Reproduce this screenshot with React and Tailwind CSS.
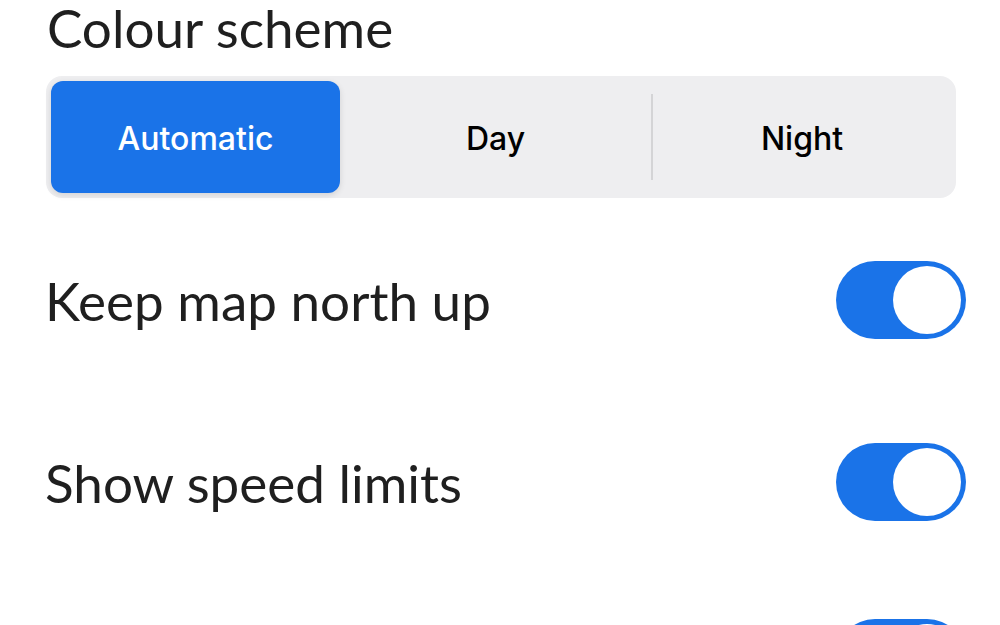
import React from "react";

function Toggle() {
  return (
    <div className="flex h-[78px] w-[130px] items-center justify-end rounded-full bg-[#1a73e8] p-[5px]">
      <div className="h-[68px] w-[68px] rounded-full bg-white" />
    </div>
  );
}

function Row({ label }) {
  return (
    <div className="flex h-[182px] items-center justify-between pl-[45px] pr-[34px]">
      <span className="text-[53px] leading-none text-[#1f1f1f]">{label}</span>
      <Toggle />
    </div>
  );
}

function Segment({ label, active, className }) {
  return (
    <div
      className={
        (active
          ? "rounded-[12px] bg-[#1a73e8] text-white shadow-[0_2px_6px_rgba(0,0,0,0.12)] "
          : "text-black ") +
        "flex h-full items-center justify-center pt-[3px] " +
        className
      }
      style={{ fontFamily: "Inter, Roboto, sans-serif" }}
    >
      <span className="text-[32px] font-medium">{label}</span>
    </div>
  );
}

export default function App() {
  return (
    <div
      className="h-[625px] w-[1000px] overflow-hidden bg-white"
      style={{ fontFamily: "Lato, 'Open Sans', sans-serif" }}
    >
      <h1 className="pl-[47px] pt-[2px] text-[53px] leading-[52px] text-[#1f1f1f]">
        Colour scheme
      </h1>

      {/* segmented control */}
      <div className="ml-[46px] mt-[22px] flex h-[122px] w-[910px] items-center rounded-[16px] bg-[#eeeef0] p-[5px]">
        <Segment label="Automatic" active className="w-[289px]" />
        <Segment label="Day" className="w-[311px]" />
        <div className="h-[86px] w-[2px] bg-[#d4d4d6]" />
        <Segment label="Night" className="flex-1" />
      </div>

      <div className="mt-[11px]">
        <Row label="Keep map north up" />
        <Row label="Show speed limits" />
        <div className="flex justify-end pr-[34px] pt-[46px]">
          <Toggle />
        </div>
      </div>
    </div>
  );
}
